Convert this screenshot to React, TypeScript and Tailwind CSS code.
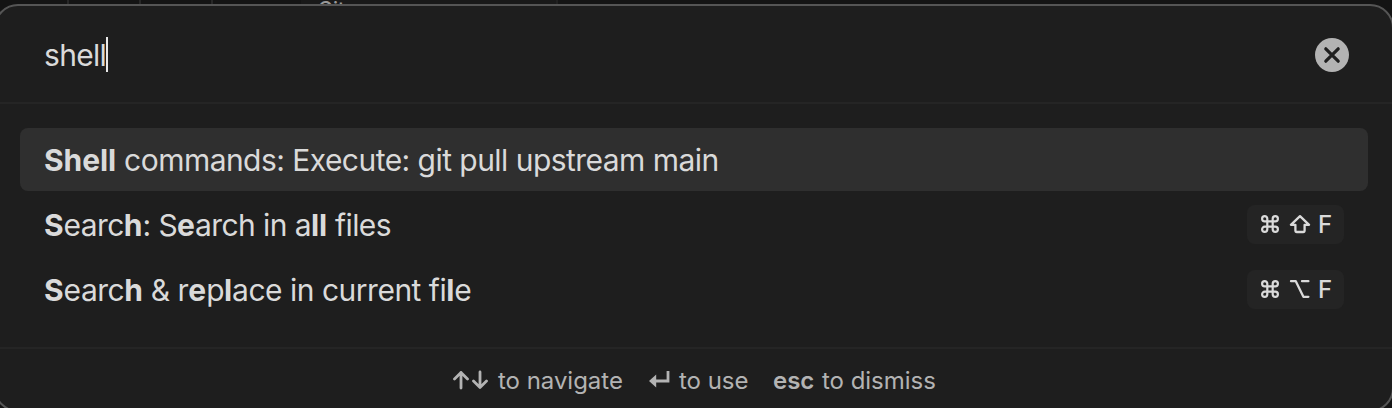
import type { ReactNode } from "react";

type Part = { text: string; hit?: boolean };

function CommandIcon() {
  return (
    <svg className="h-[18px] w-[18px]" viewBox="0 0 18 18" fill="none" stroke="currentColor" strokeWidth="2.2">
      <path d="M6.3 6.3V3.7A2.6 2.6 0 1 0 3.7 6.3H14.3A2.6 2.6 0 1 0 11.7 3.7V14.3A2.6 2.6 0 1 0 14.3 11.7H3.7A2.6 2.6 0 1 0 6.3 14.3Z" />
    </svg>
  );
}

function ShiftIcon() {
  return (
    <svg className="h-[20px] w-[22px]" viewBox="0 0 22 20" fill="none" stroke="currentColor" strokeWidth="2.3" strokeLinejoin="round">
      <path d="M11 2.1 1.9 10.8H6.4V16.6Q6.4 18 7.8 18H14.2Q15.6 18 15.6 16.6V10.8H20.1Z" />
    </svg>
  );
}

function OptionIcon() {
  return (
    <svg className="h-[20px] w-[22px]" viewBox="0 0 22 20" fill="none" stroke="currentColor" strokeWidth="2.3" strokeLinecap="round" strokeLinejoin="round">
      <path d="M2 2.2H6.8L14.4 17.8H19.4M13 2.2H19.4" />
    </svg>
  );
}

function Hotkey({ modifier }: { modifier: ReactNode }) {
  return (
    <div className="mb-px flex h-[39px] w-[97px] items-center rounded-[8px] bg-[#242424] pl-[14px] text-[#dadada]">
      <CommandIcon />
      <span className="ml-[10px] flex">{modifier}</span>
      <span className="ml-[7px] pt-[2px] text-[24px] leading-none font-[450]">F</span>
    </div>
  );
}

function Row({ parts, selected, tracking, modifier }: { parts: Part[]; selected?: boolean; tracking: string; modifier?: ReactNode }) {
  return (
    <div className={`flex items-center justify-between rounded-[8px] px-6 ${selected ? "h-[63px] bg-[#2f2f2f]" : "h-[65px]"}`}>
      <div className={`whitespace-pre text-[30px] leading-[40px] font-[430] ${tracking}`}>
        {parts.map((p, i) => (
          <span key={i} className={p.hit ? "font-bold tracking-[-0.05px]" : ""}>{p.text}</span>
        ))}
      </div>
      {modifier && <Hotkey modifier={modifier} />}
    </div>
  );
}

export default function App() {
  return (
    <div className="h-[408px] w-full overflow-hidden bg-[#141414] font-['Inter',sans-serif] text-[#dadada]">
      <div className="flex h-[4px] overflow-hidden">
        <div className="w-[69px] border-r-2 border-[#272727]" />
        <div className="w-[72px] border-r-2 border-[#272727]" />
        <div className="w-[72px] border-r-2 border-[#272727]" />
        <div className="w-[88px]" />
        <div className="w-[257px] border-r-2 border-[#202020] bg-[#191919] pl-[17px] text-[20px] leading-[18px] font-medium text-[#999999]">Git</div>
      </div>
      <div className="-ml-[6px] flex h-[408px] w-[1400px] flex-col rounded-[24px] border-2 border-[#555555] bg-[#1e1e1e]">
        <div className="flex h-[98px] items-center justify-between border-b-2 border-[#252525] pt-px pr-[43px] pl-12">
          <div className="flex items-center">
            <span className="w-[62px] pt-px text-[30px] leading-[40px] font-[440] tracking-[-0.7px]">shell</span>
            <span className="h-[35px] w-[2px] bg-[#e8e8e8]" />
          </div>
          <svg className="mt-px h-[34px] w-[34px]" viewBox="0 0 34 34">
            <circle cx="17" cy="17" r="17" fill="#b3b3b3" />
            <path d="M10.8 10.8 23.2 23.2M23.2 10.8 10.8 23.2" stroke="#1e1e1e" strokeWidth="3.2" strokeLinecap="round" />
          </svg>
        </div>
        <div className="flex h-[243px] flex-col pt-6 pr-6 pl-6">
          <Row selected tracking="tracking-[-0.54px]" parts={[{ text: "Shell", hit: true }, { text: " commands: Execute: git pull upstream main" }]} />
          <div className="h-px" />
          <Row
            tracking="tracking-[-0.58px]"
            modifier={<ShiftIcon />}
            parts={[{ text: "S", hit: true }, { text: "earc" }, { text: "h", hit: true }, { text: ": S" }, { text: "e", hit: true }, { text: "arch in a" }, { text: "ll", hit: true }, { text: " files" }]}
          />
          <Row
            tracking="tracking-[-0.5px]"
            modifier={<OptionIcon />}
            parts={[{ text: "S", hit: true }, { text: "earc" }, { text: "h", hit: true }, { text: " & r" }, { text: "e", hit: true }, { text: "p" }, { text: "l", hit: true }, { text: "ace in current fi" }, { text: "l", hit: true }, { text: "e" }]}
          />
        </div>
        <div className="flex h-[63px] items-center border-t-2 border-[#252525] pt-px pl-[456px] text-[24px] leading-[30px] font-[430] tracking-[-0.03px] text-[#b3b3b3]">
          <svg className="h-[20px] w-[36px]" viewBox="0 0 36 20" fill="none" stroke="currentColor" strokeWidth="2.8" strokeLinecap="round" strokeLinejoin="round">
            <path d="M9 18V2.5M2.5 9 9 2.5 15.5 9M28 2V17.5M21.5 11 28 17.5 34.5 11" />
          </svg>
          <span className="ml-[10px] w-[126px] pt-px whitespace-nowrap">to navigate</span>
          <svg className="ml-[25px] h-[20px] w-[21px]" viewBox="0 0 21 20" fill="none">
            <path d="M19 1V11H6" stroke="currentColor" strokeWidth="2.8" />
            <path d="M0 11 7.2 4.6V17.4Z" fill="currentColor" />
          </svg>
          <span className="ml-[9px] w-[69px] pt-px whitespace-nowrap">to use</span>
          <span className="ml-[25px] w-[41px] pt-px font-semibold">esc</span>
          <span className="ml-[8px] pt-px whitespace-nowrap">to dismiss</span>
        </div>
      </div>
    </div>
  );
}
